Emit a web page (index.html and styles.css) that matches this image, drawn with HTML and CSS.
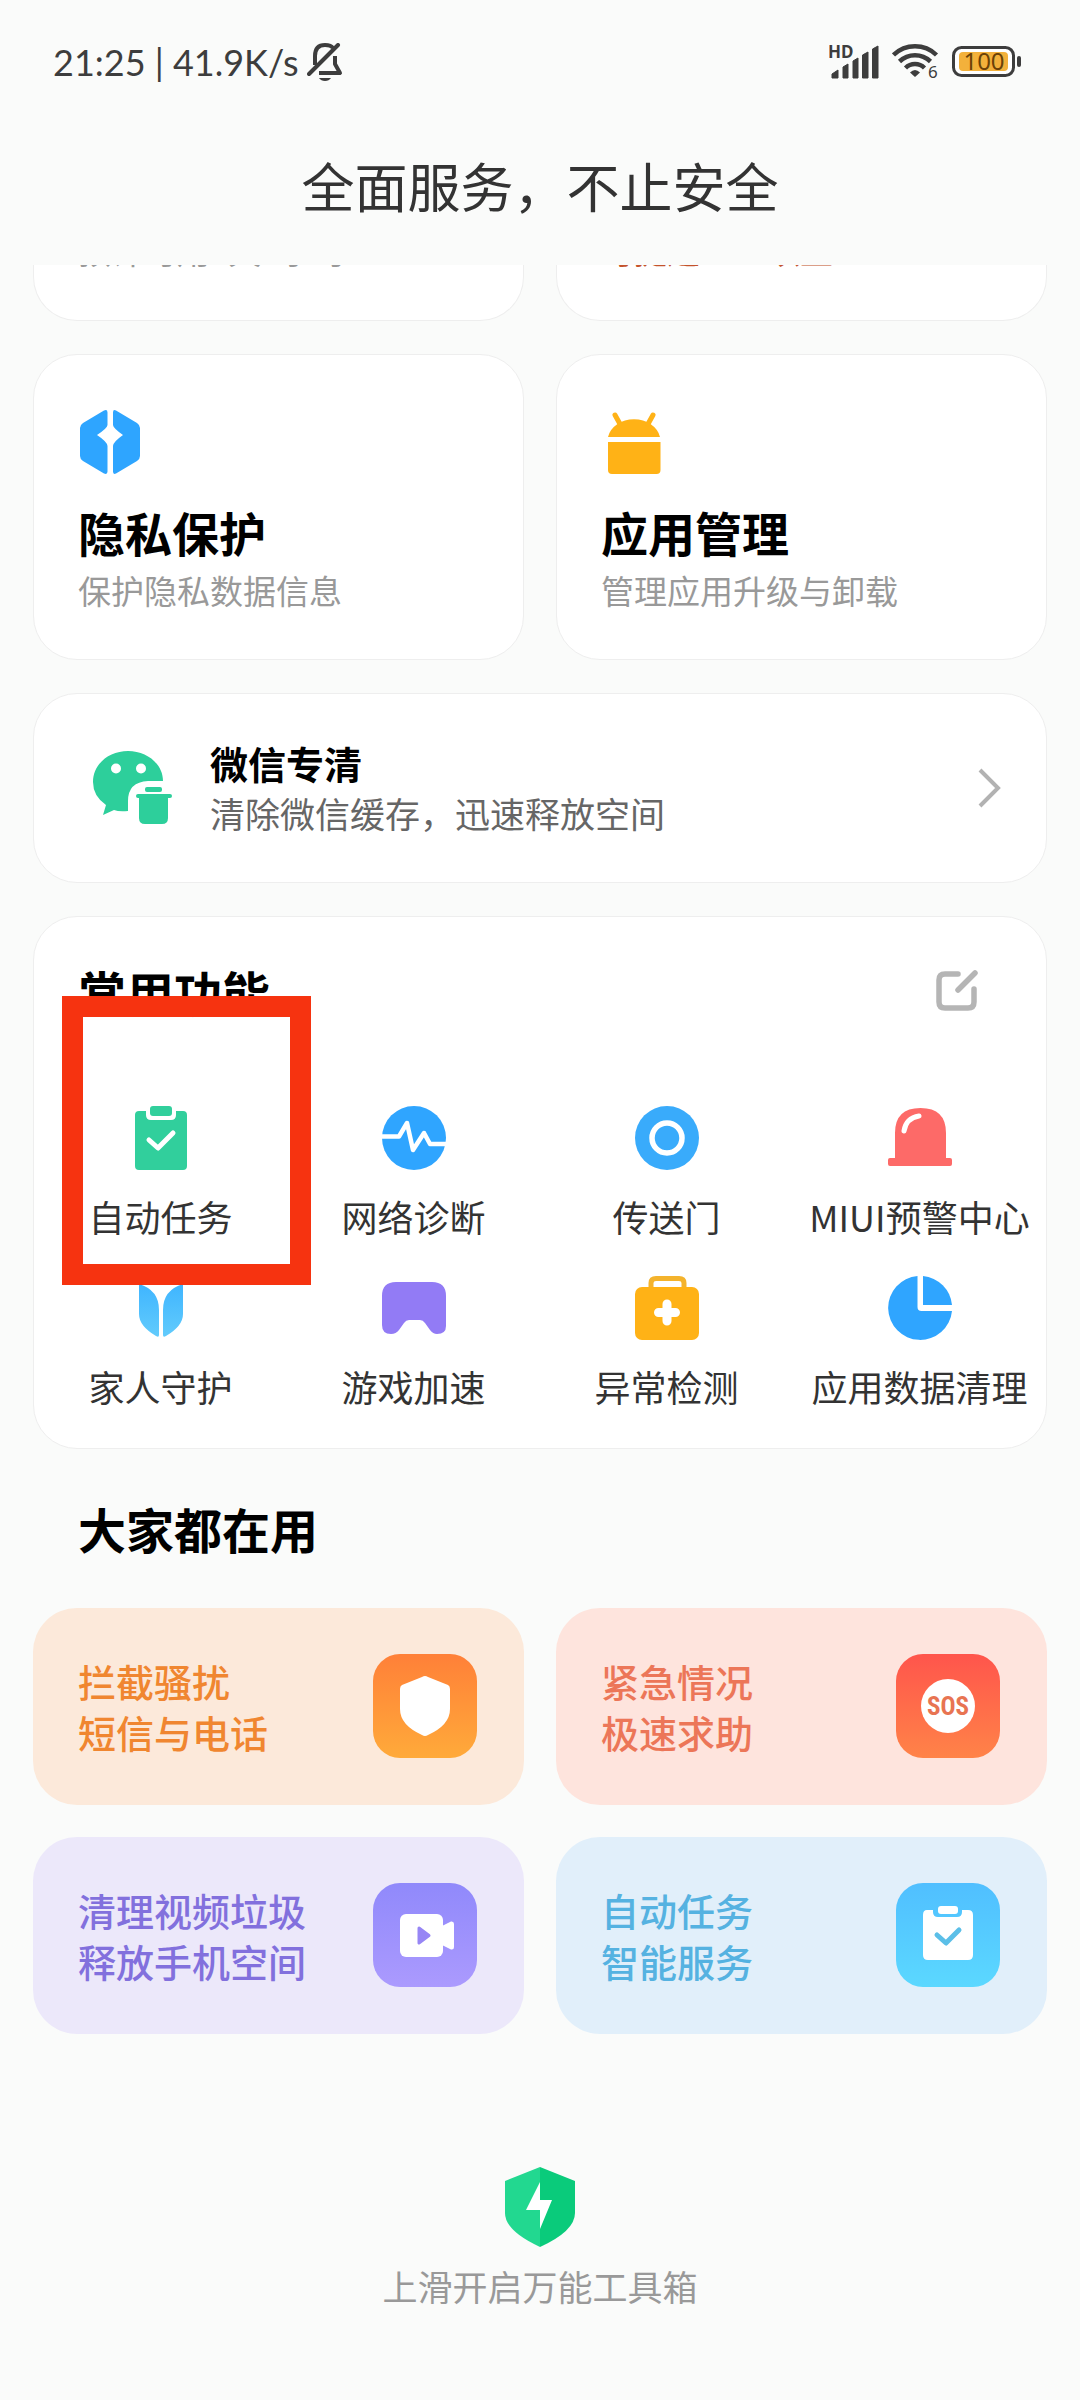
FILE: index.html
```html
<!DOCTYPE html>
<html lang="zh-CN">
<head>
<meta charset="utf-8">
<meta name="viewport" content="width=device-width, initial-scale=1">
<title>全面服务，不止安全</title>
<link rel="stylesheet" href="styles.css">
</head>
<body>
<header class="status-bar">
  <div class="status-left">
    <span>21:25 | 41.9K/s</span>
    <svg class="bell" width="36" height="38" viewBox="0 0 36 38" aria-hidden="true">
      <path d="M8 22V13Q8 2 18 2Q24 2 26 5" fill="none" stroke="#3d3d3d" stroke-width="4"/>
      <path d="M28 13V21L33 30H12" fill="none" stroke="#3d3d3d" stroke-width="4" stroke-linejoin="round"/>
      <path d="M2 31L31 2" stroke="#3d3d3d" stroke-width="4" stroke-linecap="round"/>
      <path d="M12 35H24Q22 38 18 38Q14 38 12 35Z" fill="#3d3d3d"/>
    </svg>
  </div>
  <div class="status-right">
    <svg width="50" height="50" viewBox="0 -8 50 50" aria-hidden="true">
      <text class="hd" x="-1" y="13">HD</text>
      <path d="M3 33V29L9 25V33ZM14 33V22L19 19V33ZM24 33V16L29 13V33ZM33.500 33V10L39 7V33ZM43.500 33V4L49 1V33Z" fill="#3d3d3d" stroke="#3d3d3d" stroke-linejoin="round"/>
    </svg>
    <svg width="47" height="51" viewBox="0 -7 47 51" aria-hidden="true">
      <g fill="none" stroke="#3d3d3d" stroke-width="4.500">
        <path d="M1.500 12A31 31 0 0 1 44.500 12"/>
        <path d="M7.500 18.500A22.500 22.500 0 0 1 38.500 18.500"/>
        <path d="M13.500 25A13.500 13.500 0 0 1 32.500 25"/>
      </g>
      <path d="M23 34L18 29.500Q23 24.500 28 29.500Z" fill="#3d3d3d"/>
      <text class="wifi-gen" x="36" y="35">6</text>
    </svg>
    <svg width="70" height="48" viewBox="0 -8 70 48" aria-hidden="true">
      <rect x="1.500" y="1.500" width="60" height="28" rx="8" fill="#fff" stroke="#3d3d3d" stroke-width="3"/>
      <rect x="7" y="6" width="49" height="19" rx="4" fill="#f3b13b"/>
      <rect x="65" y="10" width="4" height="11" rx="2" fill="#3d3d3d"/>
      <text class="charge" x="32" y="24">100</text>
    </svg>
  </div>
</header>

<h1 class="page-title">全面服务，不止安全</h1>

<main class="content">
  <div class="pair">
    <a class="card peek" href="#"><p class="desc">预计可用1天8小时</p></a>
    <a class="card peek" href="#"><p class="desc boost">可提速30%以上</p></a>
  </div>

  <div class="pair">
    <a class="card feature" href="#">
      <svg width="64" height="64" viewBox="-2 0 64 64" aria-hidden="true">
        <path d="M24 .5Q27.500-1 27.500 2.500V15Q27.500 18 17 25Q27.500 32 27.500 36V61.500Q27.500 65 24 63.500L3 51Q0 49 0 46V18Q0 15 3 13ZM36 .5Q33-1 33 2.500V15Q33 18 43 25Q33 32 33 36V61.500Q33 65 36 63.500L57 51Q60 49 60 46V18Q60 15 57 13Z" fill="#2ea5ff"/>
      </svg>
      <h2 class="heading">隐私保护</h2>
      <p class="desc">保护隐私数据信息</p>
    </a>
    <a class="card feature" href="#">
      <svg width="64" height="64" viewBox="-2 0 64 64" aria-hidden="true">
        <path d="M5 27A26.500 22 0 0 1 57 27Z" fill="#ffb216"/>
        <path d="M12 5L17 14M50 5L45 14" stroke="#ffb216" stroke-width="5" stroke-linecap="round"/>
        <path d="M5 32H57.500V60Q57.500 64 53.500 64H9Q5 64 5 60Z" fill="#ffb216"/>
      </svg>
      <h2 class="heading">应用管理</h2>
      <p class="desc">管理应用升级与卸载</p>
    </a>
  </div>

  <a class="card wechat" href="#">
    <svg width="80" height="74" viewBox="0 0 80 74" aria-hidden="true">
      <path d="M35 0C54 0 70 13 70 30H55Q35 31 35 50V60Q26 61 21 59L10 64L13 54Q0 45 0 31C0 13 16 0 35 0Z" fill="#2dcf9b"/>
      <circle cx="23" cy="17.500" r="5" fill="#fff"/><circle cx="48" cy="17.500" r="5" fill="#fff"/>
      <rect x="52" y="36" width="17" height="5" rx="2" fill="#2dcf9b"/>
      <rect x="43" y="43" width="36" height="4" rx="2" fill="#2dcf9b"/>
      <path d="M46 45H75V67Q75 73 69 73H52Q46 73 46 67Z" fill="#2dcf9b"/>
    </svg>
    <div class="wechat-text">
      <h2 class="wechat-title">微信专清</h2>
      <p class="wechat-desc">清除微信缓存，迅速释放空间</p>
    </div>
    <svg width="24" height="40" viewBox="0 0 24 40" aria-hidden="true">
      <path d="M2 2L20 20L2 38" fill="none" stroke="#b2b2b2" stroke-width="4"/>
    </svg>
  </a>

  <section class="card tools">
    <div class="tools-head">
      <h2 class="section-title">常用功能</h2>
      <button class="edit" type="button" aria-label="编辑">
        <svg width="42" height="42" viewBox="0 0 42 42" aria-hidden="true">
          <path d="M22 4H9Q3 4 3 10V32Q3 38 9 38H32Q38 38 38 32V19M22 20L39 3" fill="none" stroke="#b5b5b5" stroke-width="5.500" stroke-linecap="round"/>
        </svg>
      </button>
    </div>
    <nav class="tool-grid">
      <a class="tool marked" href="#">
        <svg width="64" height="64" viewBox="0 0 64 64" aria-hidden="true">
          <path d="M10 5H17V9Q17 14 22 14H42Q47 14 47 9V5H54Q58 5 58 9V60Q58 64 54 64H10Q6 64 6 60V9Q6 5 10 5Z" fill="#31cf9c"/>
          <rect x="21" y="0" width="22" height="10" rx="3" fill="#31cf9c"/>
          <path d="M20 34L29 42L44 27" fill="none" stroke="#fff" stroke-width="5" stroke-linecap="round" stroke-linejoin="round"/>
        </svg>
        <span>自动任务</span>
      </a>
      <a class="tool" href="#">
        <svg width="64" height="64" viewBox="0 0 64 64" aria-hidden="true">
          <circle cx="32" cy="32" r="32" fill="#2fa5ff"/>
          <path d="M-1 30.500H17L25 17L31 44L42 27L48 38H65" fill="none" stroke="#fff" stroke-width="4.500" stroke-linejoin="round"/>
        </svg>
        <span>网络诊断</span>
      </a>
      <a class="tool" href="#">
        <svg width="64" height="64" viewBox="0 0 64 64" aria-hidden="true">
          <circle cx="32" cy="32" r="32" fill="#39abfb"/>
          <circle cx="32" cy="32" r="15" fill="none" stroke="#fff" stroke-width="5.500"/>
        </svg>
        <span>传送门</span>
      </a>
      <a class="tool" href="#">
        <svg width="64" height="64" viewBox="0 0 64 64" aria-hidden="true">
          <path d="M7 52V27Q7 2 32.500 2Q58 2 58 27V52H62Q64 52 64 54V58Q64 60 62 60H2Q0 60 0 58V54Q0 52 2 52Z" fill="#fd6a68"/>
          <path d="M16 25Q18 12 31 10" fill="none" stroke="#fff" stroke-width="5" stroke-linecap="round"/>
        </svg>
        <span>MIUI预警中心</span>
      </a>
      <a class="tool" href="#">
        <svg width="64" height="64" viewBox="0 0 64 64" aria-hidden="true">
          <defs><linearGradient id="leaf" x1="0" y1="0" x2="0" y2="1"><stop offset="0" stop-color="#3fb5ff"/><stop offset="1" stop-color="#62cbfc"/></linearGradient></defs>
          <path d="M10 8Q30 14 30 34V59Q30 62 27 60Q10 50 10 38ZM54 8Q34 14 34 34V59Q34 62 37 60Q54 50 54 38Z" fill="url(#leaf)"/>
        </svg>
        <span>家人守护</span>
      </a>
      <a class="tool" href="#">
        <svg width="64" height="64" viewBox="0 0 64 64" aria-hidden="true">
          <path d="M14 6H50Q64 6 64 20V50Q64 58 55 58Q51 58 48 54L43 47Q41 44 38 44H27Q24 44 22 47L17 54Q14 58 9 58Q0 58 0 49V20Q0 6 14 6Z" fill="#927bf5"/>
        </svg>
        <span>游戏加速</span>
      </a>
      <a class="tool" href="#">
        <svg width="64" height="64" viewBox="0 0 64 64" aria-hidden="true">
          <path d="M16 14V7Q16 2.500 21 2.500H44Q49 2.500 49 7V14" fill="none" stroke="#f4b32c" stroke-width="5"/>
          <rect y="11" width="64" height="53" rx="7" fill="#ffb216"/>
          <rect x="20" y="6" width="24" height="5" fill="#fff"/>
          <path d="M32 28V45M23.500 36.500H40.500" stroke="#fff" stroke-width="9" stroke-linecap="round"/>
        </svg>
        <span>异常检测</span>
      </a>
      <a class="tool" href="#">
        <svg width="64" height="64" viewBox="0 0 64 64" aria-hidden="true">
          <path d="M29.500 0V31Q29.500 35 33.500 35H64A32 32 0 1 1 29.500 0Z" fill="#2fa5ff"/>
          <path d="M35 0A32 32 0 0 1 64 29H35Z" fill="#2fa5ff"/>
        </svg>
        <span>应用数据清理</span>
      </a>
    </nav>
  </section>

  <h2 class="section-title popular-title">大家都在用</h2>

  <div class="pair popular">
    <a class="promo orange" href="#">
      <span>拦截骚扰<br>短信与电话</span>
      <svg class="tile" viewBox="0 0 104 104" aria-hidden="true">
        <path d="M49 23Q52 21 55 23L75 31Q77 32 77 35V55Q77 71 55 81Q52 83 49 81Q27 71 27 55V35Q27 32 29 31Z" fill="#fff"/>
      </svg>
    </a>
    <a class="promo red" href="#">
      <span>紧急情况<br>极速求助</span>
      <svg class="tile" viewBox="0 0 104 104" aria-hidden="true">
        <circle cx="52" cy="52" r="27" fill="#fff"/>
        <text class="sos" x="52" y="61">SOS</text>
      </svg>
    </a>
    <a class="promo violet" href="#">
      <span>清理视频垃圾<br>释放手机空间</span>
      <svg class="tile" viewBox="0 0 104 104" aria-hidden="true">
        <rect x="27" y="31" width="43" height="43" rx="6" fill="#fff"/>
        <path d="M69 43L78 38.500Q81 38 81 41V64Q81 67 78 66.500L69 62Z" fill="#fff"/>
        <path d="M46 45L56 52.500L46 60Z" fill="#9786f5" stroke="#9786f5" stroke-width="3" stroke-linejoin="round"/>
      </svg>
    </a>
    <a class="promo blue" href="#">
      <span>自动任务<br>智能服务</span>
      <svg class="tile" viewBox="0 0 104 104" aria-hidden="true">
        <path d="M31 27H37V29Q37 34 42 34H61Q66 34 66 29V27H72Q77 27 77 32V72Q77 77 72 77H32Q27 77 27 72V32Q27 27 31 27Z" fill="#fff"/>
        <rect x="42" y="23" width="20" height="8" rx="3" fill="#fff"/>
        <path d="M41 52L50 60L63 47" fill="none" stroke="#5bbfe8" stroke-width="5" stroke-linecap="round" stroke-linejoin="round"/>
      </svg>
    </a>
  </div>
</main>

<footer class="footer">
  <svg width="70" height="80" viewBox="0 0 70 80" aria-hidden="true">
    <path d="M35 0V80Q0 64 0 46V14Z" fill="#22d890"/>
    <path d="M35 0V80Q70 64 70 46V14Z" fill="#0acb7b"/>
    <path d="M35 15V33H47L35 62V43H21Z" fill="#fff"/>
  </svg>
  <p>上滑开启万能工具箱</p>
</footer>
</body>
</html>
```
FILE: styles.css
```css
* {
  box-sizing: border-box;
}

body {
  margin: 0;
  min-height: 100vh;
  background: #fafbfa;
  color: #333;
  font-family: "Noto Sans CJK SC", sans-serif;
}

h1,
h2,
p {
  margin: 0;
}

a {
  color: inherit;
  text-decoration: none;
}

svg {
  display: block;
  flex: none;
}

/* Status bar */
.status-bar {
  display: flex;
  align-items: center;
  justify-content: space-between;
  height: 123px;
  padding: 0 58px 0 53px;
  color: #3d3d3d;
  font-family: Lato, "Noto Sans", sans-serif;
  font-size: 36px;
  line-height: 48px;
}

.status-left {
  display: flex;
  align-items: center;
  gap: 9px;
}

.status-right {
  display: flex;
  align-items: center;
  gap: 13px;
}

.hd {
  fill: #3d3d3d;
  font: 700 17px "Noto Sans", sans-serif;
}

.wifi-gen {
  fill: #3d3d3d;
  font: 17px "Noto Sans", sans-serif;
}

.charge {
  fill: #6b4207;
  font: 24px "Noto Sans", sans-serif;
  text-anchor: middle;
}

.page-title {
  margin: 22px 0 40px;
  color: #333;
  font-size: 53px;
  font-weight: 400;
  line-height: 80px;
  text-align: center;
}

/* Cards */
.content {
  display: flex;
  flex-direction: column;
  gap: 33px;
  padding: 0 33px;
}

.pair {
  display: grid;
  grid-template-columns: 1fr 1fr;
  gap: 32px;
}

.card {
  border: 1px solid #eee;
  border-radius: 44px;
  background: #fff;
}

.desc {
  color: #999;
  font-size: 33px;
  line-height: 48px;
}

.boost {
  color: #c4532c;
}

/* Row scrolled under the title: only its lower edge shows */
.peek {
  display: flex;
  align-items: flex-end;
  height: 56px;
  padding: 0 44px 46px;
  overflow: hidden;
  border-top: 0;
  border-radius: 0 0 44px 44px;
}

.feature {
  padding: 55px 44px 45px;
}

.heading {
  margin-top: 24px;
  color: #000;
  font-size: 47px;
  font-weight: 700;
  line-height: 68px;
}

.wechat {
  display: flex;
  align-items: center;
  padding: 44px 44px 44px 59px;
}

.wechat-text {
  flex: 1;
  margin-left: 37px;
}

.wechat-title {
  color: #000;
  font-size: 38px;
  font-weight: 700;
  line-height: 50px;
}

.wechat-desc {
  color: #666;
  font-size: 35px;
  line-height: 50px;
}

/* Common tools */
.tools {
  padding: 38px 0 36px;
}

.tools-head {
  display: flex;
  align-items: center;
  justify-content: space-between;
  margin-bottom: 79px;
  padding: 0 68px 0 44px;
}

.section-title {
  color: #000;
  font-size: 48px;
  font-weight: 700;
  line-height: 72px;
}

.edit {
  padding: 0;
  border: 0;
  background: none;
}

.tool-grid {
  display: grid;
  grid-template-columns: repeat(4, 1fr);
  row-gap: 34px;
}

.tool {
  display: flex;
  flex-direction: column;
  align-items: center;
  gap: 20px;
  color: #333;
  font-size: 36px;
  line-height: 52px;
  white-space: nowrap;
}

.marked {
  position: relative;
}

.marked::after {
  content: "";
  position: absolute;
  inset: -110px -24px -43px 28px;
  border: 21px solid #f63310;
}

/* Popular */
.popular-title {
  margin: 10px 0 11px;
  padding-left: 45px;
}

.promo {
  display: flex;
  align-items: center;
  justify-content: space-between;
  padding: 45px 47px 47px 45px;
  min-height: 197px;
  border-radius: 44px;
  font-size: 38px;
  font-weight: 500;
  line-height: 51px;
}

.tile {
  width: 104px;
  height: 104px;
  border-radius: 27px;
}

.sos {
  fill: #e87452;
  font: 700 25px "Liberation Sans Narrow", "Roboto Condensed", "Noto Sans", sans-serif;
  text-anchor: middle;
}

.orange {
  background: #fce9da;
  color: #f08630;
}

.orange .tile {
  background: linear-gradient(#ff8038, #ffaa3a);
}

.red {
  background: #fee4dd;
  color: #ec7658;
}

.red .tile {
  background: linear-gradient(#ff554c, #ff8348);
}

.violet {
  background: #ece8fa;
  color: #8270dd;
}

.violet .tile {
  background: linear-gradient(#9089fb, #ab9afe);
}

.blue {
  background: #e1effa;
  color: #55b2e1;
}

.blue .tile {
  background: linear-gradient(#50bfff, #5bd8ff);
}

.footer {
  display: flex;
  flex-direction: column;
  align-items: center;
  gap: 13px;
  padding: 133px 0 87px;
  color: #999;
  font-size: 35px;
  line-height: 52px;
}
```
